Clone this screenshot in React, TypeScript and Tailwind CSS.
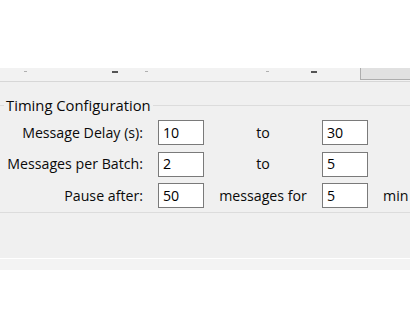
import React from "react";

function Box({ value }: { value: string }) {
  return (
    <div className="w-[46px] h-[25px] border border-[#7a7a7a] bg-white flex items-center pl-[4px] text-black">
      {value}
    </div>
  );
}

function Row({
  label,
  a,
  mid,
  b,
  tail,
}: {
  label: string;
  a: string;
  mid: string;
  b: string;
  tail?: string;
}) {
  return (
    <div className="flex items-center h-[25px]">
      <div className="w-[143px] text-right whitespace-nowrap">{label}</div>
      <div className="ml-[15px]">
        <Box value={a} />
      </div>
      <div className="w-[118px] text-center whitespace-nowrap">{mid}</div>
      <Box value={b} />
      {tail ? <div className="ml-[15px] whitespace-nowrap">{tail}</div> : null}
    </div>
  );
}

export default function App() {
  return (
    <div
      className="w-[410px] h-[315px] bg-white flex flex-col overflow-hidden text-[14.2px] text-[#0a0a0a]"
      style={{ fontFamily: '"Open Sans", "Noto Sans", sans-serif' }}
    >
      <div className="h-[68px] bg-white shrink-0" />
      <div className="h-[13px] bg-[#f2f2f2] flex shrink-0">
        <div className="flex-1 flex items-start pt-[3px]">
          <div className="ml-[24px] w-[3px] h-px bg-[#b0b0b0]" />
          <div className="ml-[85px] w-[6px] h-[2px] bg-[#555555]" />
          <div className="ml-[27px] w-[3px] h-px bg-[#b0b0b0]" />
          <div className="ml-[118px] w-[3px] h-px bg-[#b0b0b0]" />
          <div className="ml-[42px] w-[6px] h-[2px] bg-[#555555]" />
        </div>
        <div className="w-[50px] h-[12px] bg-[#e1e1e1] border-l border-b border-[#adadad]" />
      </div>
      <div className="h-px bg-[#d7d7d7] shrink-0" />
      <div className="h-[176px] bg-[#f0f0f0] shrink-0 flex flex-col">
        <div className="mt-[15px] flex items-center h-[16px]">
          <div className="w-[4px] h-px bg-[#dcdcdc]" />
          <div className="px-[2px] text-[14.8px] leading-[16px] whitespace-nowrap">Timing Configuration</div>
          <div className="flex-1 h-px bg-[#dcdcdc]" />
        </div>
        <div className="mt-[7px] flex flex-col gap-[6.5px]">
          <Row label="Message Delay (s):" a="10" mid="to" b="30" />
          <Row label="Messages per Batch:" a="2" mid="to" b="5" />
          <Row label="Pause after:" a="50" mid="messages for" b="5" tail="min" />
        </div>
        <div className="mt-[4px] h-px bg-[#dcdcdc]" />
      </div>
      <div className="h-px bg-white shrink-0" />
      <div className="h-[11px] bg-[#f3f3f3] shrink-0" />
      <div className="flex-1 bg-white" />
    </div>
  );
}
